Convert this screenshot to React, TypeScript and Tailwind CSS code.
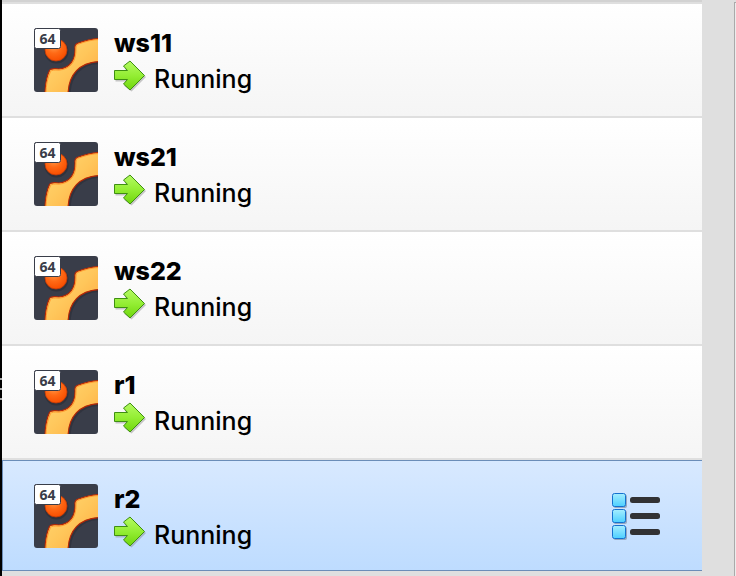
import { useState } from "react";

const machines = ["ws11", "ws21", "ws22", "r1", "r2"];

function SystemIcon() {
  return (
    <svg viewBox="0 0 64 64" className="size-16 shrink-0" aria-hidden="true">
      <clipPath id="tile">
        <rect width="64" height="64" rx="3" />
      </clipPath>
      <g clipPath="url(#tile)">
        <rect width="64" height="64" fill="#393d49" />
        <circle cx="22.500" cy="23.500" r="12" fill="#20232b" opacity="0.4" />
        <circle cx="22" cy="22" r="11" fill="url(#ball)" stroke="#c23a08" strokeWidth="0.800" />
        <path
          d="M66 11.500C60 12 53 13.500 46 16.500Q42 18 42 21C42 31 37 41 26 42.500Q18 42 16 46C13 52 12 58 12 68H35C35 47 47 35 66 34.500Z"
          fill="none"
          stroke="#20232b"
          strokeWidth="3"
          opacity="0.35"
        />
        <path
          d="M66 10.500C58 10.500 51 12.500 43 15.500Q40.500 17 41 20C41.500 32 36 40 25 41Q17 40 15.500 42.500C12 50 11 58 11 68H34C34 46 46 34 66 33.500Z"
          fill="url(#band)"
          stroke="#b72805"
          strokeWidth="1.200"
        />
        <path
          d="M66 11.500C59 11.500 51 13.500 43.500 16.500Q42 18 42 20C42.500 33 37 41 25 42.200Q18 41.500 16.500 43.500C13.500 50 12 58 12 65"
          fill="none"
          stroke="#ff9a2e"
          strokeWidth="1"
        />
      </g>
      <rect x="0.500" y="0.500" width="26" height="20" rx="2" fill="#fff" stroke="#393d49" />
      <text x="13.500" y="16" textAnchor="middle" fill="#393d49" className="font-['Noto_Sans',sans-serif] text-[14px] font-bold">
        64
      </text>
    </svg>
  );
}

function RunningArrow() {
  return (
    <svg viewBox="0 0 32 32" className="size-8 shrink-0" aria-hidden="true">
      <path
        d="M1.500 12.500H14L10.500 8.500L17.500 3.500L32 17L17.500 31.500L10.500 26L14 21.500H1.500Z"
        fill="#777"
        opacity="0.4"
      />
      <path
        d="M0.500 10.500H13.500L9.500 6L16 1L30.500 15.500L16 30L9.500 24L13.500 19.500H0.500Z"
        fill="url(#arrow)"
        stroke="#3f8f12"
        strokeLinejoin="round"
      />
    </svg>
  );
}

function MenuIcon() {
  return (
    <svg viewBox="0 -1 50 48" className="h-12 w-[50px]" aria-hidden="true">
      {[0, 16, 32].map((y) => (
        <g key={y}>
          <rect x="1.500" y={y + 1.5} width="13.500" height="13.500" rx="2" fill="#7d8fa5" opacity="0.7" />
          <rect x="0.500" y={y + 0.5} width="13" height="13" rx="2" fill="url(#cell)" stroke="#1571cf" />
          <rect x="18" y={y + 4} width="30" height="6" rx="2.500" fill="#323234" />
        </g>
      ))}
    </svg>
  );
}

function Gradients() {
  return (
    <svg className="absolute size-0" aria-hidden="true">
      <defs>
        <radialGradient id="ball" cx="0.4" cy="0.3" r="0.7">
          <stop offset="0" stopColor="#ffa050" />
          <stop offset="0.5" stopColor="#ff6a16" />
          <stop offset="1" stopColor="#f84e00" />
        </radialGradient>
        <linearGradient id="band" x1="0" y1="0" x2="1" y2="1">
          <stop offset="0" stopColor="#ffdc78" />
          <stop offset="0.5" stopColor="#ffc65a" />
          <stop offset="1" stopColor="#ffa23a" />
        </linearGradient>
        <linearGradient id="arrow" x1="0" y1="0" x2="0" y2="1">
          <stop offset="0" stopColor="#b4fa62" />
          <stop offset="0.5" stopColor="#94ee34" />
          <stop offset="1" stopColor="#6fd60c" />
        </linearGradient>
        <linearGradient id="cell" x1="0" y1="0" x2="0" y2="1">
          <stop offset="0" stopColor="#a5eeff" />
          <stop offset="1" stopColor="#4ccfff" />
        </linearGradient>
      </defs>
    </svg>
  );
}

export default function App() {
  const [selected, setSelected] = useState("r2");

  return (
    <main className="flex min-h-screen bg-[#dfdfdf] font-[Inter,'Liberation_Sans',sans-serif] text-[25px] text-black">
      <Gradients />
      <div className="flex w-0.5 shrink-0 flex-col gap-2 bg-black pt-[378px]">
        <span className="h-0.5 bg-[#aaa]" />
        <span className="h-0.5 bg-[#aaa]" />
        <span className="h-0.5 bg-[#aaa]" />
      </div>
      <ul className="flex min-w-0 flex-1 flex-col gap-0.5 border-t-2 border-[#d2d2d2] pt-0.5">
        {machines.map((name) => {
          const active = name === selected;
          return (
            <li
              key={name}
              className={
                active
                  ? "flex h-[111px] items-center border border-r-0 border-[#6b8db8] bg-linear-to-b from-[#d8e9ff] to-[#bedcff] pt-px pr-10 pl-[31px]"
                  : "flex h-28 items-center bg-linear-to-b from-white to-[#f5f5f5] pr-10 pl-8"
              }
            >
              <button
                type="button"
                aria-pressed={active}
                onClick={() => setSelected(name)}
                className="flex flex-1 items-center gap-4 text-left"
              >
                <SystemIcon />
                <span className="flex flex-col pt-1">
                  <span className="leading-[34px] font-extrabold">{name}</span>
                  <span className="flex items-start gap-2 leading-[38px] font-medium">
                    <RunningArrow />
                    Running
                  </span>
                </span>
              </button>
              {active && (
                <button type="button" aria-label="Machine tools">
                  <MenuIcon />
                </button>
              )}
            </li>
          );
        })}
      </ul>
      <div className="w-8 shrink-0" />
      <div className="mt-0.5 w-0.5 shrink-0 border-t border-l border-[#aaa] bg-[#ececec]" />
    </main>
  );
}
